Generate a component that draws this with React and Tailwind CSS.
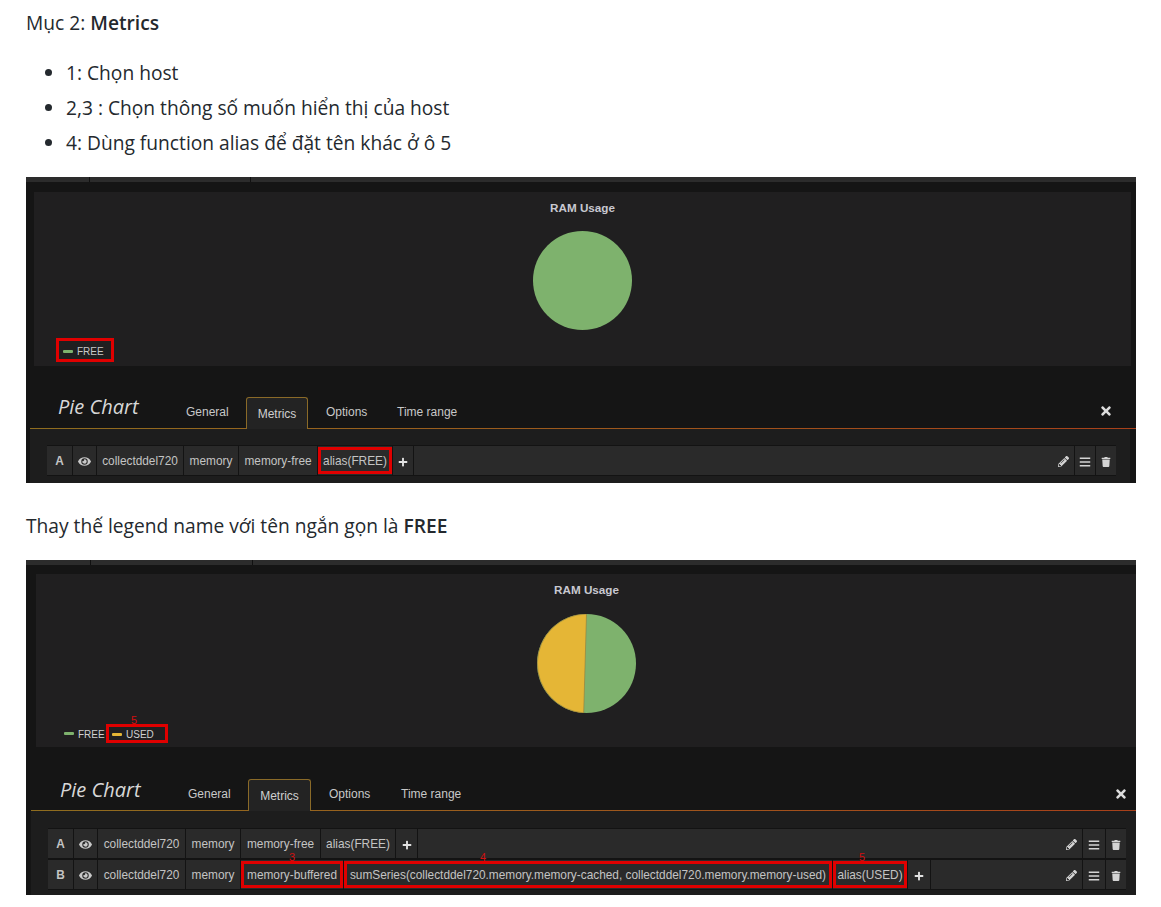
import React from 'react';
import { FaEye, FaPencilAlt, FaBars, FaTrash, FaTimes, FaPlus } from 'react-icons/fa';

function RedBox({ className = '' }) {
    return <span className={`absolute border-[3px] border-[#e00000] ${className}`} />;
}

function RedNumber({ children, className = '' }) {
    return <span className={`absolute text-[11px] leading-none text-[#d01010] ${className}`}>{children}</span>;
}

function Cell({ className = '', children }) {
    return (
        <div className={`relative flex h-full shrink-0 items-center justify-center bg-[#2a2a2a] pt-[2px] text-[11.85px] text-[#c4c4c4] ${className}`}>
            {children}
        </div>
    );
}

function Row({ widths, letter, cells, endClass, tools }) {
    return (
        <div className="flex h-[31px] gap-px bg-[#131313] border-y border-[#131313]">
            <Cell className={`${widths.letter} font-bold`}>{letter}</Cell>
            <Cell className={widths.eye}><FaEye className="text-[13px] text-[#c8c8c8]" /></Cell>
            {cells.map((c) => (
                <Cell key={c.text} className={c.width}>
                    {c.number}
                    <span className="whitespace-nowrap">{c.text}</span>
                    {c.box}
                </Cell>
            ))}
            <Cell className={widths.plus}><FaPlus className="text-[10px] text-[#e2e2e2]" /></Cell>
            <Cell className="flex-1 justify-end pr-[5px]">
                <FaPencilAlt className="text-[11px] text-[#d4d4d4]" />
            </Cell>
            <Cell className={tools}><FaBars className="text-[12px] text-[#d4d4d4]" /></Cell>
            <Cell className={endClass}><FaTrash className="text-[10px] text-[#d4d4d4]" /></Cell>
        </div>
    );
}

function Tabs({ general, metrics, options, range }) {
    return (
        <div className="flex items-end text-[12px] text-[#c8c8c8]">
            <div className={`flex h-[31px] items-center pb-[2px] ${general}`}>General</div>
            <div className={`relative z-10 -mb-px flex h-[32px] items-center justify-center rounded-t-[3px] border border-b-0 border-[#8a6a28] bg-[#232323] pt-[1px] text-[#cfcfcf] ${metrics}`}>
                Metrics
            </div>
            <div className={`flex h-[31px] items-center pb-[2px] ${options}`}>Options</div>
            <div className={`flex h-[31px] items-center pb-[2px] ${range}`}>Time range</div>
        </div>
    );
}

function TopStrip({ first, second }) {
    return (
        <div className="flex h-[5px] bg-[#2c2c2c]">
            <div className={`h-full border-r border-[#111] ${first}`} />
            <div className={`h-full border-r border-[#111] ${second}`} />
        </div>
    );
}

function FullPie() {
    return (
        <svg width="99" height="99" viewBox="0 0 99 99" className="mx-auto block">
            <circle cx="49.5" cy="49.5" r="49.5" fill="#7EB26D" />
        </svg>
    );
}

function SplitPie() {
    return (
        <svg width="99" height="99" viewBox="0 0 99 99" className="mx-auto block">
            <circle cx="49.5" cy="49.5" r="49.5" fill="#7EB26D" />
            <path d="M49.5 0 A49.5 49.5 0 0 0 46.7 98.9 Z" fill="#E5B636" stroke="#8f7a3c" strokeWidth="0.6" />
        </svg>
    );
}

function LegendMark({ color }) {
    return <span className={`inline-block h-[3px] w-[10px] rounded-[1px] ${color}`} />;
}

export default function App() {
    const sans = { fontFamily: '"Open Sans", "Noto Sans", sans-serif' };

    return (
        <div className="h-[907px] overflow-hidden bg-white pl-[26px] pr-[25px] pt-[9px] text-[19.2px] text-[#24292e]" style={sans}>
            <p className="h-[28px] leading-[28px]">Mục 2: <strong className="font-semibold">Metrics</strong></p>
            <ul className="mt-[22px] list-disc pl-[40px] leading-[28px]">
                <li className="h-[28px]">1: Chọn host</li>
                <li className="mt-[7px] h-[28px]">2,3 : Chọn thông số muốn hiển thị của host</li>
                <li className="mt-[7px] h-[28px]">4: Dùng function alias để đặt tên khác ở ô 5</li>
            </ul>

            {/* first screenshot */}
            <div className="mt-[20px] h-[306px] overflow-hidden bg-[#151515] font-['Liberation_Sans',sans-serif]">
                <TopStrip first="w-[64px]" second="w-[161px]" />
                <div className="ml-[8px] mr-[5px] mt-[10px] h-[174px] bg-[#201f20]">
                    <div className="pt-[9px] text-center text-[11.7px] font-bold leading-[14px] text-[#c8c8d0]">RAM Usage</div>
                    <div className="mt-[16px]"><FullPie /></div>
                    <div className="ml-[22px] mt-[8px] flex h-[24px] w-[58px] items-center gap-[4px] border-[3px] border-[#e00000] pl-[4px] pt-[2px] text-[10px] text-[#c8c8c8]">
                        <LegendMark color="bg-[#7EB26D]" />
                        <span>FREE</span>
                    </div>
                </div>
                <div className="ml-[4px] flex h-[62px] items-end">
                    <div className="w-[28px]" />
                    <div className="w-[127px] self-center pt-[20px] text-[20px] italic leading-[24px] text-[#d8d8d8]" style={sans}>Pie Chart</div>
                    <Tabs general="w-[60px] ml-[1px]" metrics="w-[62px]" options="w-[89px] pl-[18px]" range="pl-[0px]" />
                    <FaTimes className="ml-auto mb-[10px] mr-[23px] text-[14px] text-[#dcdcdc]" />
                </div>
                <div className="ml-[4px] h-px bg-linear-to-r from-[#8f6d1f] to-[#a8401a]" />
                <div className="ml-[4px] mr-[6px] h-[55px] bg-[#1d1d1d] pl-[17px] pr-[14px] pt-[16px]">
                    <Row
                        widths={{ letter: 'w-[25px]', eye: 'w-[23px]', plus: 'w-[20px]' }}
                        letter="A"
                        tools="w-[20px]"
                        endClass="w-[20px]"
                        cells={[
                            { text: 'collectddel720', width: 'w-[86px]' },
                            { text: 'memory', width: 'w-[54px]' },
                            { text: 'memory-free', width: 'w-[78px]' },
                            { text: 'alias(FREE)', width: 'w-[74px]', box: <RedBox className="inset-x-0 inset-y-[1px]" /> },
                        ]}
                    />
                </div>
            </div>

            <p className="mt-[29px] h-[28px] leading-[28px]">Thay thế legend name với tên ngắn gọn là <strong className="font-semibold">FREE</strong></p>

            {/* second screenshot */}
            <div className="mt-[20px] h-[335px] overflow-hidden bg-[#151515] font-['Liberation_Sans',sans-serif]">
                <TopStrip first="w-[65px]" second="w-[162px]" />
                <div className="ml-[10px] mt-[9px] h-[173px] bg-[#201f20]">
                    <div className="pl-[1px] pt-[9px] text-center text-[11.7px] font-bold leading-[14px] text-[#c8c8d0]">RAM Usage</div>
                    <div className="mt-[17px] pl-[1px]"><SplitPie /></div>
                    <div className="ml-[28px] mt-[11px] flex items-center text-[10px] text-[#d0d0d0]">
                        <LegendMark color="bg-[#7EB26D]" />
                        <span className="ml-[4px] w-[27px] pt-[1px]">FREE</span>
                        <div className="relative ml-[1px] flex h-[19px] w-[62px] items-center gap-[4px] border-[3px] border-[#e00000] pl-[3px] pt-[1px]">
                            <RedNumber className="-top-[12px] left-[22px]">5</RedNumber>
                            <LegendMark color="bg-[#E5B636]" />
                            <span>USED</span>
                        </div>
                    </div>
                </div>
                <div className="ml-[5px] flex h-[63px] items-end">
                    <div className="w-[29px]" />
                    <div className="w-[128px] self-center pt-[22px] text-[20px] italic leading-[24px] text-[#d8d8d8]" style={sans}>Pie Chart</div>
                    <Tabs general="w-[60px]" metrics="w-[63px]" options="w-[90px] pl-[18px]" range="pl-[0px]" />
                    <FaTimes className="ml-auto mb-[9px] mr-[8px] text-[14px] text-[#dcdcdc]" />
                </div>
                <div className="ml-[5px] h-px bg-linear-to-r from-[#8f6d1f] to-[#a8401a]" />
                <div className="ml-[5px] h-[84px] bg-[#1d1d1d] pl-[17px] pr-[10px] pt-[17px]">
                    <Row
                        widths={{ letter: 'w-[25px]', eye: 'w-[23px]', plus: 'w-[21px]' }}
                        letter="A"
                        tools="w-[22px]"
                        endClass="w-[20px]"
                        cells={[
                            { text: 'collectddel720', width: 'w-[87px]' },
                            { text: 'memory', width: 'w-[54px]' },
                            { text: 'memory-free', width: 'w-[79px]' },
                            { text: 'alias(FREE)', width: 'w-[74px]' },
                        ]}
                    />
                    <Row
                        widths={{ letter: 'w-[25px]', eye: 'w-[23px]', plus: 'w-[22px]' }}
                        letter="B"
                        tools="w-[22px]"
                        endClass="w-[20px]"
                        cells={[
                            { text: 'collectddel720', width: 'w-[87px]' },
                            { text: 'memory', width: 'w-[54px]' },
                            {
                                text: 'memory-buffered',
                                width: 'w-[102px]',
                                number: <RedNumber className="-top-[8px] left-[48px]">3</RedNumber>,
                                box: <RedBox className="inset-x-0 inset-y-[1px]" />,
                            },
                            {
                                text: 'sumSeries(collectddel720.memory.memory-cached, collectddel720.memory.memory-used)',
                                width: 'w-[488px]',
                                number: <RedNumber className="-top-[8px] left-[136px]">4</RedNumber>,
                                box: <RedBox className="inset-x-0 inset-y-[1px]" />,
                            },
                            {
                                text: 'alias(USED)',
                                width: 'w-[74px]',
                                number: <RedNumber className="-top-[8px] left-[26px]">5</RedNumber>,
                                box: <RedBox className="inset-x-0 inset-y-[1px]" />,
                            },
                        ]}
                    />
                </div>
            </div>
        </div>
    );
}
